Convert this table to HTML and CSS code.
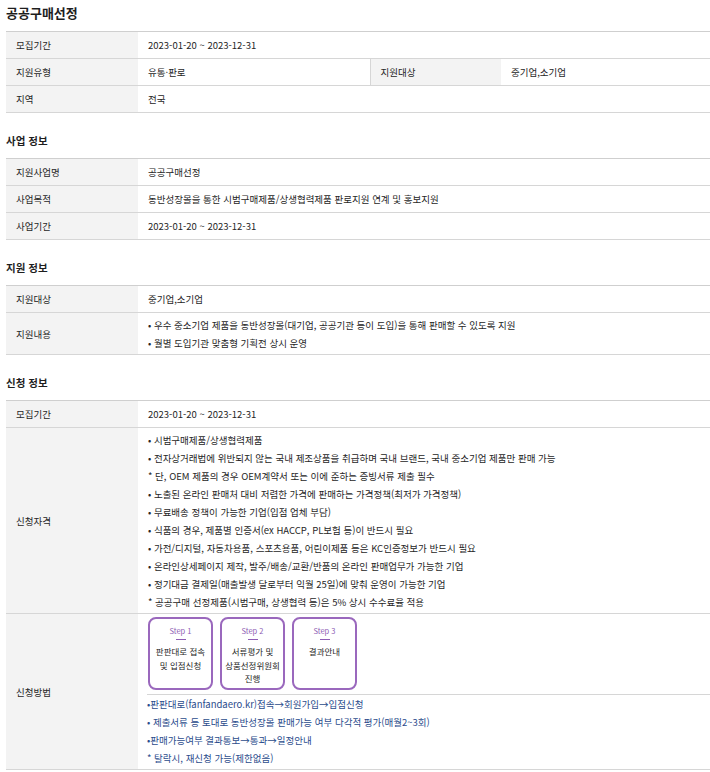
FILE: index.html
```html
<!DOCTYPE html>
<html lang="ko">
<head>
<meta charset="utf-8">
<link rel="stylesheet" href="styles.css">
</head>
<body>
<div class="page">
  <h1 class="title">공공구매선정</h1>
  <table class="info">
    <colgroup><col class="c-lab"><col class="c-val"><col class="c-lab2"><col></colgroup>
    <tr><th>모집기간</th><td colspan="3">2023-01-20 ~ 2023-12-31</td></tr>
    <tr><th>지원유형</th><td>유통·판로</td><th class="mid">지원대상</th><td>중기업,소기업</td></tr>
    <tr><th>지역</th><td colspan="3">전국</td></tr>
  </table>

  <h2 class="sec">사업 정보</h2>
  <table class="info">
    <colgroup><col class="c-lab"><col></colgroup>
    <tr><th>지원사업명</th><td>공공구매선정</td></tr>
    <tr><th>사업목적</th><td>동반성장몰을 통한 시범구매제품/상생협력제품 판로지원 연계 및 홍보지원</td></tr>
    <tr><th>사업기간</th><td>2023-01-20 ~ 2023-12-31</td></tr>
  </table>

  <h2 class="sec">지원 정보</h2>
  <table class="info">
    <colgroup><col class="c-lab"><col></colgroup>
    <tr><th>지원대상</th><td>중기업,소기업</td></tr>
    <tr><th>지원내용</th><td class="multi">
      <p>• 우수 중소기업 제품을 동반성장몰(대기업, 공공기관 등이 도입)을 통해 판매할 수 있도록 지원</p>
      <p>• 월별 도입기관 맞춤형 기획전 상시 운영</p>
    </td></tr>
  </table>

  <h2 class="sec">신청 정보</h2>
  <table class="info">
    <colgroup><col class="c-lab"><col></colgroup>
    <tr><th>모집기간</th><td>2023-01-20 ~ 2023-12-31</td></tr>
    <tr><th>신청자격</th><td class="multi">
      <p>• 시범구매제품/상생협력제품</p>
      <p>• 전자상거래법에 위반되지 않는 국내 제조상품을 취급하며 국내 브랜드, 국내 중소기업 제품만 판매 가능</p>
      <p>* 단, OEM 제품의 경우 OEM계약서 또는 이에 준하는 증빙서류 제출 필수</p>
      <p>• 노출된 온라인 판매처 대비 저렴한 가격에 판매하는 가격정책(최저가 가격정책)</p>
      <p>• 무료배송 정책이 가능한 기업(입점 업체 부담)</p>
      <p>• 식품의 경우, 제품별 인증서(ex HACCP, PL보험 등)이 반드시 필요</p>
      <p>• 가전/디지털, 자동차용품, 스포츠용품, 어린이제품 등은 KC인증정보가 반드시 필요</p>
      <p>• 온라인상세페이지 제작, 발주/배송/교환/반품의 온라인 판매업무가 가능한 기업</p>
      <p>• 정기대금 결제일(매출발생 달로부터 익월 25일)에 맞춰 운영이 가능한 기업</p>
      <p>* 공공구매 선정제품(시범구매, 상생협력 등)은 5% 상시 수수료율 적용</p>
    </td></tr>
    <tr><th>신청방법</th><td class="method">
      <div class="steps">
        <div class="step"><span class="step-no">Step 1</span><span class="dash"></span><span class="step-txt">판판대로 접속<br>및 입점신청</span></div>
        <div class="step"><span class="step-no">Step 2</span><span class="dash"></span><span class="step-txt">서류평가 및<br>상품선정위원회<br>진행</span></div>
        <div class="step"><span class="step-no">Step 3</span><span class="dash"></span><span class="step-txt">결과안내</span></div>
      </div>
      <div class="notes">
        <p>•판판대로(fanfandaero.kr)접속→회원가입→입점신청</p>
        <p>• 제출서류 등 토대로 동반성장몰 판매가능 여부 다각적 평가(매월2~3회)</p>
        <p>•판매가능여부 결과통보→통과→일정안내</p>
        <p>* 탈락시, 재신청 가능(제한없음)</p>
      </div>
    </td></tr>
  </table>
</div>
</body>
</html>
```

FILE: styles.css
```css
* { box-sizing: border-box; }
html, body { margin: 0; padding: 0; background: #fff; }
body {
  font-family: "Noto Sans CJK KR", "Noto Sans", sans-serif;
  color: #262626;
  font-size: 9.5px;
}
.page { padding: 0 0 0 6px; width: 716px; }
.title {
  margin: 0;
  padding-top: 3px;
  height: 31px;
  font-size: 13px;
  font-weight: bold;
  line-height: 20px;
  color: #1e1e1e;
}
.sec {
  margin: 0;
  height: 45px;
  padding-top: 20px;
  font-size: 10.5px;
  font-weight: bold;
  line-height: 16px;
  color: #1e1e1e;
}
.info {
  width: 704px;
  border-collapse: collapse;
  border-top: 1px solid #cfcfcf;
}
.c-lab { width: 132px; }
.c-val { width: 232px; }
.c-lab2 { width: 131px; }
.info th, .info td {
  border-bottom: 1px solid #d6d6d6;
  height: 27px;
  padding: 0 0 0 10px;
  text-align: left;
  vertical-align: middle;
  font-weight: normal;
  line-height: 16px;
}
.info th { background: #f3f3f3; }
.info th.mid { border-left: 1px solid #d6d6d6; }
.info td.multi { padding-top: 3px; padding-bottom: 2px; }
.multi p, .notes p { margin: 0; line-height: 18px; }
.info td.method { padding: 3px 0 0 9px; }
.steps { display: flex; gap: 7px; padding-left: 1px; }
.step {
  width: 65px;
  height: 73px;
  border: 2px solid #9a68bd;
  border-radius: 8px;
  display: flex;
  flex-direction: column;
  align-items: center;
  text-align: center;
  padding-top: 6px;
}
.step-no { font-size: 7.5px; color: #8e5db4; line-height: 12px; }
.dash { width: 10px; height: 1px; background: #8e5db4; margin: 2px 0 5px; }
.step-txt { font-size: 8.5px; line-height: 13.5px; color: #262626; }
.notes {
  margin-top: 4px;
  border-top: 1px solid #d6d6d6;
  padding: 0 0 2px 0;
  color: #2b4c8c;
}
```
